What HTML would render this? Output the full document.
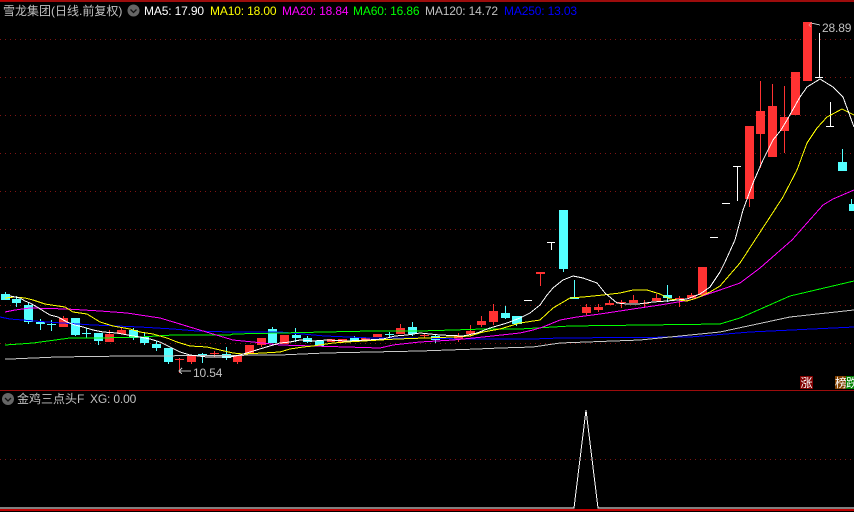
<!DOCTYPE html>
<html><head><meta charset="utf-8"><style>
html,body{margin:0;padding:0;background:#000;width:854px;height:512px;overflow:hidden}
#w{position:relative;width:854px;height:512px;overflow:hidden;background:#000}
svg{position:absolute;left:0;top:0}
.t{position:absolute;white-space:nowrap;font:12px/14px "Liberation Sans","WenQuanYi Zen Hei","Noto Sans CJK SC",sans-serif}
.m{letter-spacing:-.15px}
.b{position:absolute;font:12px/13px "WenQuanYi Zen Hei","Noto Sans CJK SC",sans-serif;color:#fff;text-align:center;overflow:hidden;height:13px}
</style></head><body><div id="w">
<svg width="854" height="512" shape-rendering="crispEdges">
<g stroke="#801414" stroke-width="1" stroke-dasharray="1 4" fill="none">
<path d="M0 39.5H854M0 77.5H854M0 115.5H854M0 153.5H854M0 191.5H854M0 229.5H854M0 267.5H854M0 305.5H854M0 343.5H854M0 459.5H854"/>
</g>
<path fill="#9c0c0c" d="M0 0h854v2H0zM0 390h854v1H0z"/>
<path fill="#c00000" d="M0 0h23v1H0z"/>
<path fill="#54ffff" d="M1 294h9v6H1zM5 292h1v2H5zM12 299h9v4h-9zM16 296h1v11h-1zM24 305h9v17h-9zM28 303h1v21h-1zM36 322h9v2h-9zM40 319h1v11h-1zM47 324h9v1h-9zM51 320h1v11h-1zM71 318h9v17h-9zM75 335h1v1h-1zM82 333h9v1h-9zM86 328h1v10h-1zM94 333h9v8h-9zM98 341h1v4h-1zM129 330h9v8h-9zM133 328h1v12h-1zM140 337h9v6h-9zM144 333h1v12h-1zM152 344h9v4h-9zM156 341h1v10h-1zM164 348h9v14h-9zM168 362h1v2h-1zM198 354h9v1h-9zM202 353h1v10h-1zM222 354h9v4h-9zM226 347h1v13h-1zM268 329h9v14h-9zM272 327h1v2h-1zM292 335h9v3h-9zM295 328h1v14h-1zM303 338h9v4h-9zM307 336h1v7h-1zM315 341h9v5h-9zM350 338h9v4h-9zM354 336h1v2h-1zM385 334h9v1h-9zM389 332h1v5h-1zM408 327h9v7h-9zM412 322h1v14h-1zM431 336h9v4h-9zM435 334h1v9h-1zM501 313h9v5h-9zM505 306h1v13h-1zM512 316h10v8h-10zM516 324h1v2h-1zM559 210h9v59h-9zM563 269h1v3h-1zM570 297h9v2h-9zM574 280h1v17h-1zM663 295h9v3h-9zM667 285h1v17h-1zM838 162h9v9h-9zM842 149h1v13h-1zM849 204h5v7h-5zM851 199h1v5h-1z"/>
<path fill="#ff3232" d="M59 318h9v9h-9zM63 316h1v2h-1zM105 334h9v8h-9zM109 330h1v4h-1zM117 330h9v4h-9zM121 328h1v2h-1zM175 359h9v1h-9zM179 358h1v15h-1zM187 355h9v7h-9zM191 362h1v2h-1zM210 353h9v1h-9zM214 351h1v6h-1zM233 355h9v7h-9zM237 362h1v2h-1zM245 345h9v9h-9zM257 338h9v7h-9zM261 345h1v2h-1zM280 335h9v9h-9zM327 339h8v3h-8zM338 339h9v3h-9zM361 338h9v2h-9zM373 334h9v3h-9zM396 328h9v6h-9zM400 324h1v4h-1zM420 335h9v1h-9zM424 333h1v5h-1zM454 336h9v3h-9zM458 333h1v9h-1zM466 331h9v3h-9zM470 325h1v11h-1zM477 321h9v4h-9zM481 316h1v11h-1zM489 311h9v11h-9zM493 304h1v21h-1zM536 272h9v2h-9zM540 274h1v12h-1zM582 307h9v6h-9zM586 304h1v11h-1zM594 307h9v3h-9zM598 304h1v8h-1zM605 303h9v2h-9zM609 300h1v3h-1zM617 302h9v1h-9zM621 300h1v8h-1zM629 300h9v3h-9zM633 295h1v5h-1zM640 303h9v1h-9zM644 300h1v7h-1zM652 298h9v3h-9zM656 294h1v4h-1zM675 298h9v1h-9zM679 296h1v11h-1zM687 295h9v3h-9zM691 293h1v2h-1zM698 267h9v28h-9zM745 126h9v73h-9zM749 199h1v8h-1zM756 111h9v23h-9zM760 81h1v30h-1zM760 134h1v34h-1zM768 106h9v51h-9zM772 84h1v22h-1zM780 117h9v14h-9zM784 86h1v31h-1zM784 131h1v22h-1zM791 72h9v43h-9zM803 22h9v59h-9z"/>
<path fill="#fff" d="M524 300h8v1h-8zM547 242h8v1h-8zM551 243h1v7h-1zM710 237h8v1h-8zM722 203h8v1h-8zM733 166h8v1h-8zM737 167h1v34h-1zM815 77h8v1h-8zM819 33h1v44h-1zM826 126h8v1h-8zM830 102h1v24h-1z"/>
<g fill="none" stroke-width="1">
<polyline stroke="#0000ff" points="0,317 5,318 10,319 47,322 93,325 140,327 173,329 197,331 230,332 280,332 325,336 372,338 420,338 463,339 533,339 560,338 690,337 750,332 854,327"/>
<polyline stroke="#c8c8c8" points="5,359 10,359 57,357 127,356 140,356 280,355 325,353 372,352 420,351 477,349 500,348 533,347 560,343 640,340 720,332 790,317 854,310"/>
<polyline stroke="#00ff00" points="5,345 20,344 33,343 70,338 100,338 140,337 173,335 230,335 233,334 280,333 325,332 372,331 420,331 453,330 483,329 520,329 570,326 720,324 740,318 790,296 854,281"/>
<polyline stroke="#ff00ff" points="5,312 15,310 30,308 67,309 100,311 127,313 140,315 160,318 180,324 193,328 213,334 233,340 253,342 280,345 313,346 380,348 393,345 420,342 453,340 483,337 520,333 533,330 543,327 560,320 577,317 600,314 633,309 660,305 690,300 720,290 740,283 760,268 792,240 807,223 823,205 833,199 854,190"/>
<polyline stroke="#ffff00" points="5,298 15,297 25,298 33,300 45,304 58,306 65,307 73,312 87,314 100,322 113,326 130,329 140,332 153,334 167,338 177,342 190,346 207,347 220,350 233,353 243,354 263,353 280,352 290,349 303,347 313,346 333,343 347,342 380,340 397,339 453,337 470,336 483,332 500,329 520,323 540,320 553,308 570,298 583,297 603,295 620,293 633,290 647,290 660,294 670,299 687,301 697,298 710,292 720,286 740,263 755,240 783,197 797,170 807,143 817,128 827,117 842,109 854,115"/>
<polyline stroke="#ffffff" points="10,296 20,298 25,301 30,303 37,307 45,312 50,315 58,317 67,322 75,325 83,327 93,330 103,332 117,333 133,336 140,337 150,339 160,342 170,347 180,352 190,355 207,357 230,357 240,355 250,352 263,348 280,343 290,342 300,340 313,341 327,340 347,341 367,340 383,339 395,336 407,335 420,333 440,335 463,336 477,333 490,328 507,323 520,318 530,313 540,305 547,295 553,288 563,280 573,276 583,278 597,283 605,293 617,303 627,304 638,304 653,302 667,301 687,299 700,294 710,287 720,272 725,262 735,240 743,210 753,183 763,160 773,140 781,130 787,120 800,97 807,87 820,79 833,87 843,97 854,127"/>
<polyline stroke="#ffffff" points="0,508 574,508 586,410 598,508 854,508"/>
<polyline stroke="#c0c0c0" points="191,371 179,371"/>
<polyline stroke="#c0c0c0" points="182,368 179,371 182,374"/>
<polyline stroke="#c0c0c0" points="820,25 811,23"/>
<polyline stroke="#f08080" points="811,23 809,25 811,27"/>
</g>
<path fill="#c00000" d="M0 509h854v2H0z"/>
<g shape-rendering="auto">
<circle cx="133.500" cy="10.500" r="6" fill="#666"/>
<path d="M130.500 9.500l3 3 3-3" fill="none" stroke="#111" stroke-width="1.300"/>
<circle cx="8" cy="399" r="6" fill="#666"/>
<path d="M5 398l3 3 3-3" fill="none" stroke="#111" stroke-width="1.300"/>
</g>
</svg>
<div class="t" style="left:3px;top:4px;color:#c0c0c0">雪龙集团(日线.前复权)</div>
<div class="t m" style="left:144px;top:4px;color:#fff">MA5: 17.90</div>
<div class="t m" style="left:210px;top:4px;color:#ff0">MA10: 18.00</div>
<div class="t m" style="left:282px;top:4px;color:#f0f">MA20: 18.84</div>
<div class="t m" style="left:353px;top:4px;color:#0f0">MA60: 16.86</div>
<div class="t m" style="left:425px;top:4px;color:#c0c0c0">MA120: 14.72</div>
<div class="t m" style="left:504px;top:4px;color:#00f">MA250: 13.03</div>
<div class="t m" style="left:822px;top:21px;color:#c0c0c0">28.89</div>
<div class="t m" style="left:193px;top:366px;color:#c0c0c0">10.54</div>
<div class="t" style="left:17px;top:392px;color:#c0c0c0">金鸡三点头F</div>
<div class="t m" style="left:90px;top:392px;color:#c0c0c0">XG: 0.00</div>
<div class="b" style="left:800px;top:376px;width:13px;background:#800000">涨</div>
<div class="b" style="left:835px;top:376px;width:11px;background:#804000">榜</div>
<div class="b" style="left:846px;top:376px;width:8px;background:#008000;text-align:left">跌</div>
</div></body></html>
